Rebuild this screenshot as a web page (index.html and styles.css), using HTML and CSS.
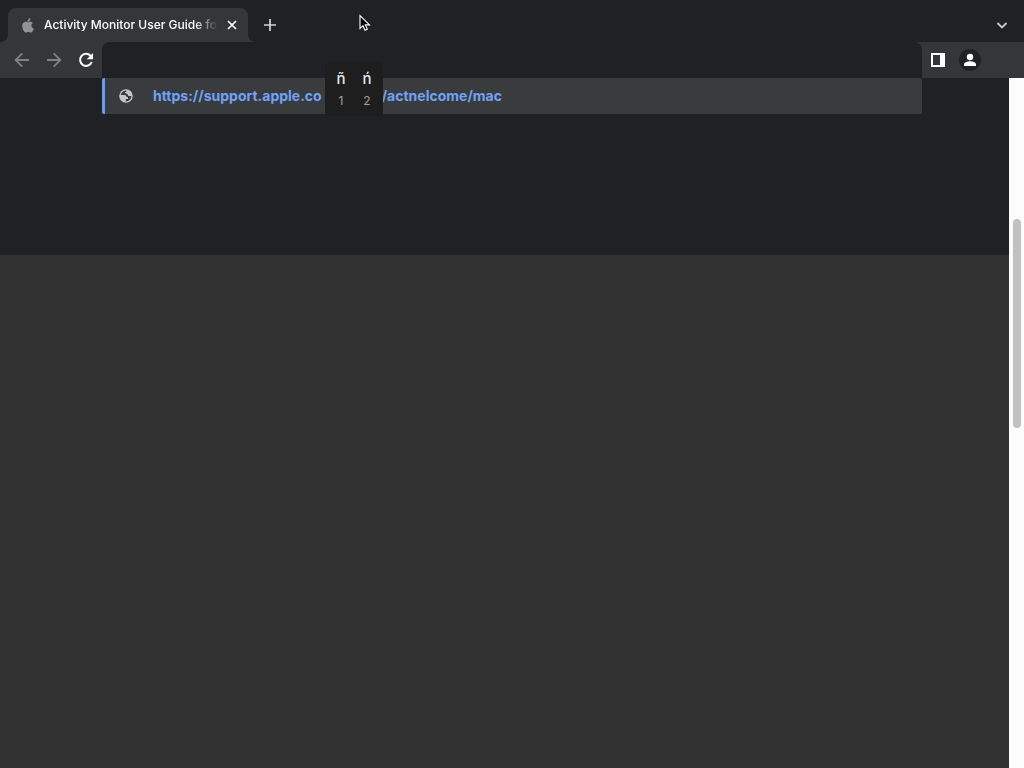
FILE: index.html
```html
<!DOCTYPE html>
<html lang="en">
<head>
    <meta charset="UTF-8">
    <meta name="viewport" content="width=device-width, initial-scale=1.0">
    <title>Activity Monitor User Guide for Mac</title>
    <link rel="stylesheet" href="styles.css">
</head>
<body>
    <header class="tab-strip">
        <div class="tab">
            <svg class="favicon" viewBox="0 0 24 24" width="16" height="16" aria-hidden="true">
                <path fill="#919396" d="M17.1 12.7c0-2.4 2-3.6 2.1-3.7-1.200-1.700-3-1.900-3.600-1.900-1.500-.2-3 .9-3.700.9s-2-.9-3.200-.9C6.900 7.100 5.200 8.100 4.200 9.700c-1.900 3.300-.5 8.200 1.400 10.900.9 1.300 2 2.800 3.400 2.700s1.900-.9 3.500-.9 2.100.9 3.500.9c1.500 0 2.400-1.300 3.300-2.700 1-1.500 1.500-3 1.500-3.100-.1 0-3.700-1.100-3.700-4.800zM14.400 5.500c.8-.9 1.300-2.200 1.100-3.500-1.100.1-2.400.7-3.200 1.700-.7.8-1.300 2.100-1.100 3.300 1.200.1 2.500-.6 3.200-1.500z"/>
            </svg>
            <span class="tab-title">Activity Monitor User Guide for</span>
            <button class="tab-close" type="button" aria-label="Close tab">
                <svg viewBox="0 0 16 16" width="16" height="16"><path d="M4 4l8 8M12 4l-8 8" fill="none" stroke="#fff" stroke-width="1.700"/></svg>
            </button>
        </div>
        <button class="new-tab" type="button" aria-label="New tab">
            <svg viewBox="0 0 16 16" width="16" height="16"><path d="M8 2v12M2 8h12" fill="none" stroke="#d4d5d7" stroke-width="1.700"/></svg>
        </button>
        <button class="tab-search" type="button" aria-label="Search tabs">
            <svg viewBox="0 0 16 16" width="16" height="16"><path d="M3.500 6l4.500 4.500L12.500 6" fill="none" stroke="#c9cacc" stroke-width="1.800"/></svg>
        </button>
    </header>

    <nav class="toolbar">
        <button class="tool" type="button" aria-label="Back">
            <svg viewBox="0 0 20 20" width="20" height="20"><path d="M17 10H4M10.300 3.300L3.600 10l6.700 6.700" fill="none" stroke="#808184" stroke-width="1.800"/></svg>
        </button>
        <button class="tool" type="button" aria-label="Forward">
            <svg viewBox="0 0 20 20" width="20" height="20"><path d="M3 10h13M9.700 3.300l6.700 6.700-6.700 6.700" fill="none" stroke="#808184" stroke-width="1.800"/></svg>
        </button>
        <button class="tool" type="button" aria-label="Reload">
            <svg viewBox="0 0 20 20" width="20" height="20">
                <path d="M15.700 12a6 6 0 1 1-1.200-6.200L16 7.300" fill="none" stroke="#fff" stroke-width="2"/>
                <path d="M17 3v6.300h-6.300z" fill="#fff"/>
            </svg>
        </button>
        <div class="omnibox">
            <input class="omnibox-input" type="text" aria-label="Address and search bar">
            <div class="suggestions">
                <a class="suggestion" href="#">
                    <svg class="globe" viewBox="0 0 16 16" width="16" height="16" aria-hidden="true">
                        <circle cx="8" cy="8" r="6.100" fill="none" stroke="#c6c7c9" stroke-width="1.300"/>
                        <path fill="#c6c7c9" d="M1.800 7h4.700c1.600 0 1.900.9 1.900 2H10v2H7.800v2.800C4 14 1.500 11 1.800 7zM8.500 2v1.300c0 .8-1.600.7-1.600 1.500 0 .9 2 .6 2.600 1.200.6.600.3 2 1.200 2h3.200C14.200 4.500 11.500 2 8.500 2z"/>
                    </svg>
                    <span class="url"><span>https://support.apple.co</span><span class="url-rest">/actnelcome/mac</span></span>
                </a>
                <div class="accents">
                    <button class="accent" type="button"><span class="letter">ñ</span><span class="key">1</span></button>
                    <button class="accent" type="button"><span class="letter">ń</span><span class="key">2</span></button>
                </div>
            </div>
        </div>
        <button class="tool" type="button" aria-label="Side panel">
            <svg viewBox="0 0 16 16" width="16" height="16"><path fill="#fff" fill-rule="evenodd" d="M1 1h14v14H1zM3 3v10h7V3z"/></svg>
        </button>
        <button class="tool" type="button" aria-label="Profile">
            <svg viewBox="0 0 22 22" width="22" height="22">
                <circle cx="11" cy="11" r="11" fill="#202124"/>
                <circle cx="11" cy="8" r="3.200" fill="#fff"/>
                <path fill="#fff" d="M5 17v-1.500c0-2.200 3.500-3.300 6-3.300s6 1.100 6 3.300V17z"/>
            </svg>
        </button>
    </nav>

    <main class="viewport">
        <div class="page">
            <div class="page-top"></div>
            <div class="page-body"></div>
        </div>
        <div class="scrollbar"><div class="thumb"></div></div>
    </main>

    <svg class="cursor" viewBox="0 0 12 18" width="12" height="18" aria-hidden="true">
        <path d="M1 1.500v13l3-2.800 2 4.600 2.300-1-2-4.400h4.200z" fill="#000" stroke="#fff" stroke-width="1.100"/>
    </svg>
</body>
</html>
```

FILE: styles.css
```css
* {
    margin: 0;
    padding: 0;
    box-sizing: border-box;
}

body {
    min-height: 100vh;
    display: flex;
    flex-direction: column;
    background: #202124;
    color: #fff;
    font-family: Inter, "Liberation Sans", sans-serif;
    font-size: 12px;
}

button {
    display: flex;
    align-items: center;
    justify-content: center;
    border: none;
    background: none;
    color: inherit;
    font: inherit;
}

svg {
    display: block;
    flex-shrink: 0;
}

/* tab strip */
.tab-strip {
    display: flex;
    align-items: center;
    height: 42px;
    padding: 8px 10px 0 8px;
}

.tab {
    position: relative;
    display: flex;
    align-items: center;
    width: 240px;
    height: 34px;
    padding: 0 8px 0 12px;
    border-radius: 8px 8px 0 0;
    background: #35363a;
}

.tab::before,
.tab::after {
    content: "";
    position: absolute;
    bottom: 0;
    width: 8px;
    height: 8px;
}

.tab::before {
    right: 100%;
    background: radial-gradient(circle at 0 0, transparent 8px, #35363a 8px);
}

.tab::after {
    left: 100%;
    background: radial-gradient(circle at 100% 0, transparent 8px, #35363a 8px);
}

.tab-title {
    flex: 1;
    min-width: 0;
    margin: 0 6px 0 8px;
    padding-bottom: 2px;
    white-space: nowrap;
    font-weight: 500;
    -webkit-mask-image: linear-gradient(to left, transparent, #000 24px);
    mask-image: linear-gradient(to left, transparent, #000 24px);
}

.new-tab {
    width: 28px;
    height: 28px;
    margin-left: 8px;
}

.tab-search {
    width: 24px;
    height: 24px;
    margin-left: auto;
}

/* toolbar */
.toolbar {
    display: flex;
    align-items: center;
    height: 36px;
    padding: 0 38px 0 6px;
    background: #35363a;
}

.tool {
    width: 32px;
    height: 32px;
}

.omnibox {
    position: relative;
    flex: 1;
    height: 36px;
    border-radius: 8px 8px 0 0;
    background: #202124;
}

.omnibox-input {
    display: block;
    width: 100%;
    height: 36px;
    padding: 0 52px;
    border: none;
    outline: none;
    background: transparent;
    color: #fff;
    font: inherit;
}

.suggestions {
    position: absolute;
    top: 100%;
    left: 0;
    right: 0;
    z-index: 1;
}

.suggestion {
    display: flex;
    align-items: center;
    gap: 19px;
    height: 36px;
    padding-left: 13px;
    border-left: 3px solid #669df6;
    border-radius: 2px;
    background: #3a3b3d;
    color: #6fa3f7;
    font-size: 14px;
    font-weight: 700;
    text-decoration: none;
    white-space: nowrap;
}

.url {
    display: flex;
    padding-bottom: 2px;
}

.url-rest {
    margin-left: 60px;
}

/* accent picker floats over the suggestion */
.accents {
    position: absolute;
    top: -16px;
    left: 223px;
    display: flex;
    width: 58px;
    height: 54px;
    padding: 0 3px;
    border-radius: 4px;
    background: #1e1e1f;
}

.accent {
    flex: 1;
    flex-direction: column;
    gap: 4px;
}

.letter {
    color: #e6e6e6;
    font-size: 15px;
    font-weight: 500;
    line-height: 20px;
}

.key {
    color: #a0a0a0;
    font-size: 12px;
    line-height: 16px;
}

/* page */
.viewport {
    flex: 1;
    display: flex;
}

.page {
    flex: 1;
    display: flex;
    flex-direction: column;
}

.page-top {
    height: 177px;
    background: #202124;
}

.page-body {
    flex: 1;
    background: #323232;
}

.scrollbar {
    width: 15px;
    padding: 141px 3px 0 4px;
    background: #fcfcfc;
}

.thumb {
    height: 209px;
    border-radius: 4px;
    background: #c1c1c1;
}

.cursor {
    position: fixed;
    top: 14px;
    left: 359px;
    z-index: 2;
}
```
